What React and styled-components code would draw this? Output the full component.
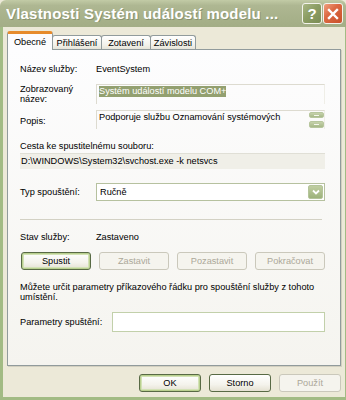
import React from 'react';
import styled, { createGlobalStyle, css } from 'styled-components';

const Global = createGlobalStyle`
  html, body { margin: 0; padding: 0; background: #ece9d8; }
  body {
    width: 346px; height: 400px; overflow: hidden;
    font-family: "Liberation Sans", Arial, sans-serif;
    font-size: 9.2px; color: #000;
  }
`;

const Window = styled.div`
  width: 346px; height: 400px;
  display: flex; flex-direction: column;
  background: #ece9d8;
`;

const TitleBar = styled.div`
  height: 27px; flex: none;
  display: flex; align-items: center;
  padding: 0 3px 0 6px;
  background: linear-gradient(#c2cba6 0%, #aeb792 20%, #a8b28b 60%, #a3ad86 100%);
  border-radius: 6px 6px 0 0;
`;

const Title = styled.div`
  flex: 1;
  color: #fff;
  font-family: "Liberation Sans", Arial, sans-serif;
  font-weight: bold; font-size: 15px;
  letter-spacing: 0.2px;
  text-shadow: 1px 1px 0 #8a9470;
  white-space: nowrap; overflow: hidden;
`;

const CaptionButton = styled.div`
  width: 20px; height: 21px; box-sizing: border-box;
  display: flex; align-items: center; justify-content: center;
  border: 1px solid #f3f3ec;
  border-radius: 3px;
  margin-left: 1px;
  color: #fff; font-weight: bold; font-size: 15px;
  ${p => p.$close ? css`
    background: linear-gradient(135deg, #f0a080 0%, #dc6a43 40%, #c9502a 100%);
  ` : css`
    background: linear-gradient(135deg, #a9b784 0%, #8c9d64 45%, #7b8c55 100%);
  `}
`;

const Frame = styled.div`
  flex: 1;
  display: flex; flex-direction: column;
  padding: 4px 4px 0 4px;
  border-left: 3px solid #a2bb84;
  border-right: 1px solid #a2bb84;
  border-bottom: 3px solid #a2bb84;
`;

const TabStrip = styled.div`
  display: flex; align-items: flex-end;
  height: 18px; flex: none;
  position: relative; z-index: 1;
`;

const Tab = styled.div`
  box-sizing: border-box;
  width: ${p => p.$w}px;
  display: flex; align-items: center; justify-content: center;
  border: 1px solid #919b9c; border-bottom: none;
  border-radius: 3px 3px 0 0;
  white-space: nowrap;
  ${p => p.$active ? css`
    height: 19px; margin-bottom: -1px;
    background: #fcfcfe;
    border-top: 3px solid #e68b2c;
    padding-bottom: 1px;
  ` : css`
    height: 14px;
    margin-left: -1px;
    background: linear-gradient(#ffffff, #f2f1ea 70%, #e6e4d8);
  `}
`;

const Panel = styled.div`
  height: 317px; flex: none; box-sizing: border-box;
  border: 1px solid #919b9c;
  box-shadow: 1px 1px 0 #d3d0c0;
  background: linear-gradient(#fdfdfe, #f5f4ef);
  padding: 14px 15px 0 12px;
  display: flex; flex-direction: column;
`;

const Row = styled.div`
  display: flex;
  align-items: ${p => p.$align || 'center'};
  margin-top: ${p => p.$mt || 0}px;
  height: ${p => p.$h ? p.$h + 'px' : 'auto'};
`;

const Label = styled.div`
  width: ${p => p.$w || 76}px; flex: none;
  line-height: ${p => p.$lh || 11}px;
  padding-top: ${p => p.$pt || 0}px;
`;

const Value = styled.div`
  line-height: 11px;
`;

const ReadOnlyBox = styled.div`
  flex: 1; align-self: stretch;
  box-sizing: border-box;
  border-top: 1px solid #dddbd0;
  border-left: 1px solid #dddbd0;
  border-right: 1px solid #efeee7;
  padding: 1px 2px;
  display: flex;
  align-items: flex-start;
  position: relative;
`;

const Selected = styled.span`
  background: #93a070; color: #fff;
  line-height: 11px;
`;

const Spin = styled.div`
  position: absolute; right: 0; top: 1px;
  display: flex; flex-direction: column; gap: 3px;
`;

const SpinButton = styled.div`
  width: 15px; height: ${p => p.$h}px; box-sizing: border-box;
  border-radius: 2px;
  background: linear-gradient(#c6d2ab, #a6b887);
  border: 1px solid #b7c69d;
  display: flex; align-items: center; justify-content: center;
  &::after { content: ''; width: 5px; height: 1px; background: #f4f6ec; }
`;

const Caption = styled.div`
  line-height: 11px;
  margin-top: ${p => p.$mt || 0}px;
`;

const PathField = styled.div`
  height: 16px; box-sizing: border-box;
  margin-top: 1px;
  background: #f0efe8;
  border-top: 1px solid #e0dfd6;
  padding: 2px 1px 0;
  line-height: 11px;
`;

const Combo = styled.div`
  flex: 1; height: 18px; box-sizing: border-box;
  background: #fff;
  border: 1px solid #b6c19f;
  display: flex; align-items: center;
  padding: 1px 1px 1px 3px;
`;

const ComboText = styled.div` flex: 1; `;

const ComboButton = styled.div`
  width: 15px; height: 14px; box-sizing: border-box;
  border-radius: 2px;
  background: linear-gradient(#c0cea2, #9db27b);
  border: 1px solid #b4c49a;
  display: flex; align-items: center; justify-content: center;
`;

const Separator = styled.div`
  height: 1px; background: #d3d1c4;
  margin-top: 18px; margin-right: 3px;
`;

const ButtonRow = styled.div`
  display: flex; gap: 8px;
  margin-top: ${p => p.$mt || 0}px;
  justify-content: ${p => p.$end ? 'flex-end' : 'flex-start'};
  padding-left: ${p => p.$pl || 0}px;
`;

const Button = styled.div`
  width: ${p => p.$w || 70}px; height: 18px; box-sizing: border-box;
  border-radius: 3px;
  display: flex; align-items: center; justify-content: center;
  ${p => p.$disabled ? css`
    border: 1px solid #cac8bb;
    color: #aca899;
    background: #f5f4ee;
  ` : css`
    border: 1px solid #586a45;
    background: linear-gradient(#ffffff, #f4f3ec 60%, #e4e1d2);
  `}
  ${p => p.$default && css`
    box-shadow: inset 0 0 0 1px #b9d08f, inset 0 0 0 2px #d3e2b6;
  `}
`;

const Para = styled.div`
  line-height: 10px;
  margin-top: 12px;
`;

const Input = styled.div`
  flex: 1; height: 20px; box-sizing: border-box;
  background: #fff;
  border: 1px solid #c2d0aa;
`;

export default function App() {
  return (
    <>
      <Global />
      <Window>
        <TitleBar>
          <Title>Vlastnosti Systém událostí modelu ...</Title>
          <CaptionButton>?</CaptionButton>
          <CaptionButton $close>
            <svg width="12" height="12" viewBox="0 0 12 12">
              <path d="M2 2 L10 10 M10 2 L2 10" stroke="#fff" strokeWidth="2.4" strokeLinecap="square" />
            </svg>
          </CaptionButton>
        </TitleBar>
        <Frame>
          <TabStrip>
            <Tab $active $w={46}>Obecné</Tab>
            <Tab $w={50}>Přihlášení</Tab>
            <Tab $w={50}>Zotavení</Tab>
            <Tab $w={46}>Závislosti</Tab>
          </TabStrip>
          <Panel>
            <Row>
              <Label>Název služby:</Label>
              <Value>EventSystem</Value>
            </Row>
            <Row $mt={9} $h={20} $align="stretch">
              <Label $lh={10}>Zobrazovaný<br />název:</Label>
              <ReadOnlyBox>
                <Selected>Systém událostí modelu COM+</Selected>
              </ReadOnlyBox>
            </Row>
            <Row $mt={6} $h={19} $align="stretch">
              <Label $pt={6}>Popis:</Label>
              <ReadOnlyBox>
                <Value>Podporuje službu Oznamování systémových</Value>
                <Spin>
                  <SpinButton $h={6} />
                  <SpinButton $h={7} />
                </Spin>
              </ReadOnlyBox>
            </Row>
            <Caption $mt={12}>Cesta ke spustitelnému souboru:</Caption>
            <PathField>D:\WINDOWS\System32\svchost.exe -k netsvcs</PathField>
            <Row $mt={14}>
              <Label>Typ spouštění:</Label>
              <Combo>
                <ComboText>Ručně</ComboText>
                <ComboButton>
                  <svg width="8" height="6" viewBox="0 0 8 6">
                    <path d="M1 1.5 L4 4.5 L7 1.5" stroke="#fff" strokeWidth="1.8" fill="none" />
                  </svg>
                </ComboButton>
              </Combo>
            </Row>
            <Separator />
            <Row $mt={12}>
              <Label>Stav služby:</Label>
              <Value>Zastaveno</Value>
            </Row>
            <ButtonRow $mt={9} $pl={1}>
              <Button $default>Spustit</Button>
              <Button $disabled>Zastavit</Button>
              <Button $disabled>Pozastavit</Button>
              <Button $disabled>Pokračovat</Button>
            </ButtonRow>
            <Para>Můžete určit parametry příkazového řádku pro spouštění služby z tohoto<br />umístění.</Para>
            <Row $mt={10}>
              <Label $w={92}>Parametry spuštění:</Label>
              <Input />
            </Row>
          </Panel>
          <ButtonRow $mt={8} $end>
            <Button $w={62} $default>OK</Button>
            <Button $w={62}>Storno</Button>
            <Button $w={62} $disabled>Použít</Button>
          </ButtonRow>
        </Frame>
      </Window>
    </>
  );
}
